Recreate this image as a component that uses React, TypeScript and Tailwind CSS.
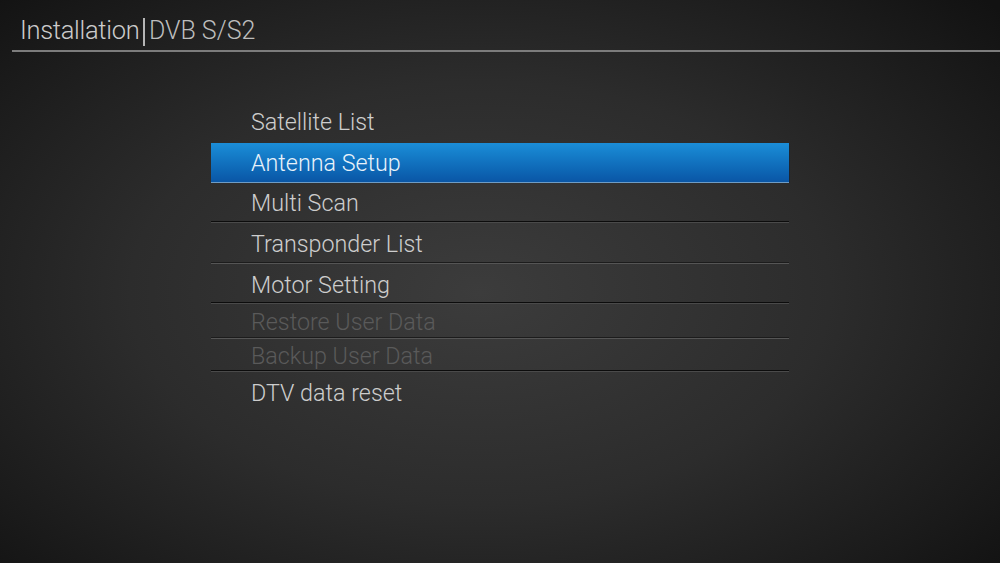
import React from "react";

interface MenuItem {
	label: string;
	disabled?: boolean;
	selected?: boolean;
	h: string;
	divider: "dark" | "light" | "none";
}

const items: MenuItem[] = [
	{ label: "Satellite List", h: "h-[40px] pt-0", divider: "none" },
	{ label: "Antenna Setup", h: "h-[40px] pt-[2px]", divider: "none", selected: true },
	{ label: "Multi Scan", h: "h-[38px] pt-[4px]", divider: "dark" },
	{ label: "Transponder List", h: "h-[39px] pt-[5px]", divider: "light" },
	{ label: "Motor Setting", h: "h-[38px] pt-[5px]", divider: "dark" },
	{ label: "Restore User Data", h: "h-[33px] pt-[5px]", disabled: true, divider: "light" },
	{ label: "Backup User Data", h: "h-[31px] pt-[4px]", disabled: true, divider: "dark" },
	{ label: "DTV data reset", h: "h-[41px] pt-[2px]", divider: "none" },
];

const App: React.FC = () => {
	return (
		<div className="flex h-[563px] w-[1000px] flex-col overflow-hidden bg-[radial-gradient(ellipse_70%_75%_at_48%_52%,#3c3c3c_0%,#2c2c2c_50%,#1a1a1a_85%,#121212_100%)] font-['Roboto',sans-serif] font-light">
			{/* header */}
			<div className="flex h-[50px] items-end pb-[7px] pl-[20px]">
				<span className="text-[25.5px] leading-none tracking-[-0.3px] text-[#cbcbcb]">Installation</span>
				<span className="mx-[4px] mb-[-3px] h-[28px] w-[1.5px] bg-[#b5b5b5]" />
				<span className="text-[25px] leading-none text-[#bdbdbd]">DVB S/S2</span>
			</div>
			<div className="ml-[12px] h-[1.5px] bg-[#7c7c7c]" />

			{/* menu */}
			<div className="ml-[211px] mt-[51px] flex w-[578px] flex-col">
				{items.map((it) => (
					<div key={it.label} className="flex flex-col">
						<div
							className={
								it.selected
									? `${it.h} flex items-center border-b border-[#6f9cc4] bg-gradient-to-b from-[#1b8ed8] to-[#0a56a6] pl-[40px] text-[23.3px] text-[#e8f2fa] shadow-[1px_0_0_#1c2530]`
									: it.disabled
									? `${it.h} flex items-center pl-[40px] text-[23.3px] text-[#5a5a5a]`
									: `${it.h} flex items-center pl-[40px] text-[23.3px] text-[#cdcdcd]`
							}
						>
							{it.label}
						</div>
						{it.divider === "dark" && (
							<div className="flex flex-col">
								<div className="h-px bg-[#0c0c0c]" />
								<div className="h-px bg-[#4a4a4a]" />
							</div>
						)}
						{it.divider === "light" && (
							<div className="flex flex-col">
								<div className="h-px bg-[#1c1c1c]" />
								<div className="h-px bg-[#555555]" />
							</div>
						)}
					</div>
				))}
			</div>
		</div>
	);
};

export default App;
